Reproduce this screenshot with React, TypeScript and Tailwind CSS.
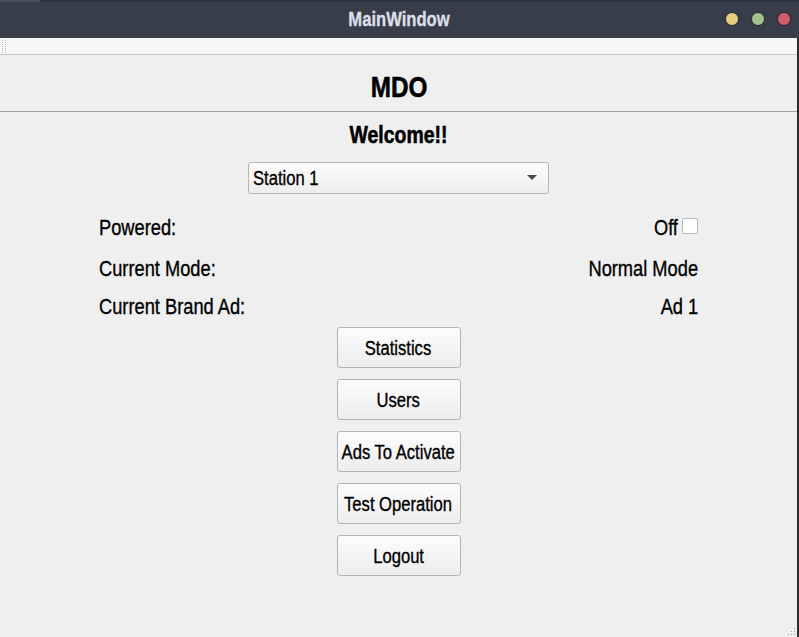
import React from 'react';

const font = { fontFamily: '"Liberation Sans", Arial, sans-serif' };

const buttons = ['Statistics', 'Users', 'Ads To Activate', 'Test Operation', 'Logout'];

// narrow text: the app's condensed face is approximated by squeezing Liberation Sans
const Narrow: React.FC<{ children: React.ReactNode; align?: 'left' | 'right' | 'center'; heavy?: boolean }> = ({
  children,
  align = 'center',
  heavy = false,
}) => {
  const origin = align === 'left' ? 'origin-left' : align === 'right' ? 'origin-right' : 'origin-center';
  return (
    <span
      className={`inline-block whitespace-nowrap ${heavy ? 'scale-x-[0.81] [-webkit-text-stroke:0.6px_currentColor]' : 'scale-x-[0.83] [-webkit-text-stroke:0.35px_currentColor]'} ${origin}`}
    >
      {children}
    </span>
  );
};

const InfoRow: React.FC<{ label: string; children: React.ReactNode; className?: string }> = ({ label, children, className = '' }) => (
  <div className={`flex items-center justify-between w-[600px] h-[26px] ${className}`}>
    <Narrow align="left">{label}</Narrow>
    <span className="flex items-center h-full">{children}</span>
  </div>
);

export default function App() {
  return (
    <div className="w-[799px] h-[637px] flex flex-col bg-[#efefef] text-black overflow-hidden" style={font}>
      {/* title bar */}
      <div className="h-[38px] bg-[#373e4a] relative flex items-center justify-center shrink-0">
        <div className="absolute left-0 top-0 w-full h-[2px] bg-[#2e343d]" />
        <div className="absolute left-0 top-0 w-[40px] h-[2px] bg-[#4a515c]" />
        <span className="text-[20px] font-bold text-[#dcdfe6]">
          <Narrow>MainWindow</Narrow>
        </span>
        <div className="absolute right-[8px] top-[12px] flex gap-[12px]">
          <span className="w-[14px] h-[14px] rounded-full bg-[#e8cb83] border border-[#23272e]" />
          <span className="w-[14px] h-[14px] rounded-full bg-[#a3c38b] border border-[#23272e]" />
          <span className="w-[14px] h-[14px] rounded-full bg-[#d05f6a] border border-[#23272e]" />
        </div>
      </div>

      <div className="flex-1 flex flex-col border-r-2 border-[#2b2b2b]">
        {/* toolbar */}
        <div className="h-[17px] bg-[#f7f7f7] border-b border-[#c6c6c6] flex items-center pl-[2px] shrink-0">
          <div className="w-[4px] h-[13px] border-x border-dotted border-[#b8b8b8]" />
        </div>

        <div className="flex-1 flex flex-col items-center relative">
          <div className="h-[57px] w-full flex items-center justify-center border-b border-[#a0a0a0] pt-[6px] text-[30px] font-bold">
            <Narrow heavy>MDO</Narrow>
          </div>

          <div className="mt-[9px] h-[28px] flex items-center text-[24px] font-bold">
            <Narrow heavy>Welcome!!</Narrow>
          </div>

          <div className="mt-[13px] w-[301px] h-[32px] border border-[#b4b4b4] rounded-[3px] bg-gradient-to-b from-[#fcfcfc] to-[#ededed] flex items-center justify-between pl-[4px] pr-[11px] text-[20px]">
            <Narrow align="left">Station 1</Narrow>
            <svg width="10" height="6" viewBox="0 0 10 6"><path d="M0 0h10L5 5z" fill="#4a4a4a" /></svg>
          </div>

          <div className="mt-[20px] text-[22px] flex flex-col">
            <InfoRow label="Powered:">
              <Narrow align="right">Off</Narrow>
              <span className="ml-[4px] mr-[1px] w-[16px] h-[16px] bg-white border border-[#b8b8b8] rounded-[2px] self-start mt-[4px]" />
            </InfoRow>
            <InfoRow label="Current Mode:" className="mt-[15px]">
              <Narrow align="right">Normal Mode</Narrow>
            </InfoRow>
            <InfoRow label="Current Brand Ad:" className="mt-[12px]">
              <Narrow align="right">Ad 1</Narrow>
            </InfoRow>
          </div>

          <div className="mt-[8px] flex flex-col gap-[11px]">
            {buttons.map((b) => (
              <button
                key={b}
                className="w-[124px] h-[41px] border border-[#b4b4b4] rounded-[3px] bg-gradient-to-b from-[#fcfcfc] to-[#ededed] text-[20px] flex items-center justify-center"
                style={font}
              >
                <Narrow>{b}</Narrow>
              </button>
            ))}
          </div>

          <div className="absolute right-[2px] bottom-[2px] grid grid-cols-3 gap-[2px]">
            {Array.from({ length: 9 }).map((_, i) => (
              <span key={i} className={`w-[1px] h-[1px] ${(i % 3) + Math.floor(i / 3) >= 2 ? 'bg-[#999]' : ''}`} />
            ))}
          </div>
        </div>
      </div>
    </div>
  );
}
